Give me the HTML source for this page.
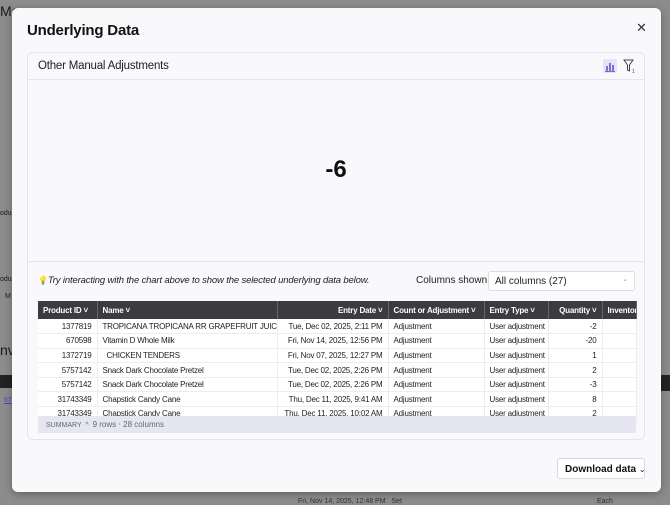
<!DOCTYPE html>
<html><head><style>
*{box-sizing:border-box;margin:0;padding:0}
body{width:670px;height:504px;overflow:hidden;background:#8c8c8c;font-family:"Liberation Sans",sans-serif;position:relative}
.bg{position:absolute;color:#1a1a1a}
.modal{position:absolute;left:12px;top:8px;width:649px;height:484px;background:#f9f9fc;border-radius:6px;box-shadow:0 2px 8px rgba(0,0,0,.3)}
.title{position:absolute;left:15px;top:14px;font-size:15px;font-weight:bold;color:#111;letter-spacing:-0.2px}
.close{position:absolute;left:624px;top:12px;font-size:13px;color:#333}
.card{position:absolute;left:15px;top:44px;width:618px;height:388px;border:1px solid #e4e4ec;border-radius:6px;background:#f9f9fc}
.chead{height:27px;border-bottom:1px solid #e4e4ec;padding:7px 10px;font-size:11.5px;color:#222;letter-spacing:-0.2px}
.big{position:absolute;left:0;width:100%;top:103px;text-align:center;font-size:24px;font-weight:bold;color:#111}
.sep{position:absolute;left:0;top:208px;width:100%;border-top:1px solid #e4e4ec}
.hint{position:absolute;left:10px;top:222px;font-size:9.5px;font-style:italic;color:#222;letter-spacing:-0.15px;white-space:nowrap}
.cs{position:absolute;left:388px;top:222px;font-size:10px;color:#222;white-space:nowrap}
.sel{position:absolute;left:460px;top:218px;width:147px;height:20px;border:1px solid #dcdce4;border-radius:3px;background:#fff;font-size:10px;padding:4px 6px;color:#222}
table{position:absolute;left:10px;top:248px;border-collapse:collapse;font-size:8px;color:#222;table-layout:fixed;width:598px;letter-spacing:-0.2px}
th{background:#3b3b40;color:#fff;font-weight:bold;height:18px;padding:0 5px;text-align:left;white-space:nowrap;overflow:hidden;border-right:1px solid #666}
td{height:14.6px;padding:0 5px;white-space:nowrap;overflow:hidden;border-right:1px solid #ececf2;border-bottom:1px solid #ececf2;background:#fff}
.r{text-align:right}
.sum{position:absolute;left:10px;top:363px;width:598px;height:17px;background:#e6e6f3;font-size:7px;color:#666;padding:4px 8px}
.dl{position:absolute;left:545px;top:450px;width:88px;height:21px;border:1px solid #d8d8e0;border-radius:3px;background:#fff;font-size:10px;font-weight:bold;padding:5px 7px;color:#111;white-space:nowrap}
</style></head><body>
<div class="bg" style="left:0;top:3px;font-size:14px">Ma</div>
<div class="bg" style="left:0;top:210px;font-size:7px">odu</div>
<div class="bg" style="left:0;top:276px;font-size:7px">odu</div>
<div class="bg" style="left:5px;top:293px;font-size:7px">M</div>
<div class="bg" style="left:0;top:342px;font-size:14px">nv</div>
<div class="bg" style="left:0;top:375px;width:12px;height:13px;background:#222"></div>
<div class="bg" style="left:661px;top:375px;width:9px;height:16px;background:#222"></div>
<div class="bg" style="left:4px;top:397px;font-size:7px;color:#44c;text-decoration:underline">67</div>
<div class="bg" style="left:298px;top:498px;font-size:7px;color:#333">Fri, Nov 14, 2025, 12:48 PM &nbsp; Set</div>
<div class="bg" style="left:597px;top:498px;font-size:7px;color:#333">Each</div>
<div class="modal">
<div class="title">Underlying Data</div>
<div class="close">✕</div>
<div class="card">
<div class="chead">Other Manual Adjustments
<span style="position:absolute;left:575px;top:6px;width:14px;height:14px;background:#e6e3f7;border-radius:2px"><svg width="14" height="14"><rect x="3" y="7" width="2" height="5" fill="#7a6fd6"/><rect x="6" y="4" width="2" height="8" fill="#7a6fd6"/><rect x="9" y="6" width="2" height="6" fill="#7a6fd6"/><rect x="2" y="12" width="10" height="1" fill="#7a6fd6"/></svg></span>
<svg style="position:absolute;left:594px;top:5px" width="14" height="16"><path d="M2 2h9L7.5 7v6L5.5 12V7z" fill="none" stroke="#444" stroke-width="1"/><text x="10" y="15" font-size="5" fill="#444">1</text></svg></div>
<div class="big">-6</div>
<div class="sep"></div>
<div class="hint"><span style="color:#e8c84a;font-style:normal;font-size:8px">💡</span>Try interacting with the chart above to show the selected underlying data below.</div>
<div class="cs">Columns shown:</div>
<div class="sel">All columns (27)<span style="position:absolute;right:6px;top:3px;font-size:7px;color:#999">⌄</span></div>
<table>
<colgroup><col style="width:59px"><col style="width:180px"><col style="width:111px"><col style="width:96px"><col style="width:64px"><col style="width:54px"><col style="width:34px"></colgroup>
<tr><th>Product ID ˅</th><th>Name ˅</th><th class="r">Entry Date ˅</th><th>Count or Adjustment ˅</th><th>Entry Type ˅</th><th class="r">Quantity ˅</th><th>Inventory</th></tr>
<tr><td class="r">1377819</td><td>TROPICANA TROPICANA RR GRAPEFRUIT JUICE</td><td class="r">Tue, Dec 02, 2025, 2:11 PM</td><td>Adjustment</td><td>User adjustment</td><td class="r">-2</td><td></td></tr>
<tr><td class="r">670598</td><td>Vitamin D Whole Milk</td><td class="r">Fri, Nov 14, 2025, 12:56 PM</td><td>Adjustment</td><td>User adjustment</td><td class="r">-20</td><td></td></tr>
<tr><td class="r">1372719</td><td>&nbsp; CHICKEN TENDERS</td><td class="r">Fri, Nov 07, 2025, 12:27 PM</td><td>Adjustment</td><td>User adjustment</td><td class="r">1</td><td></td></tr>
<tr><td class="r">5757142</td><td>Snack Dark Chocolate Pretzel</td><td class="r">Tue, Dec 02, 2025, 2:26 PM</td><td>Adjustment</td><td>User adjustment</td><td class="r">2</td><td></td></tr>
<tr><td class="r">5757142</td><td>Snack Dark Chocolate Pretzel</td><td class="r">Tue, Dec 02, 2025, 2:26 PM</td><td>Adjustment</td><td>User adjustment</td><td class="r">-3</td><td></td></tr>
<tr><td class="r">31743349</td><td>Chapstick Candy Cane</td><td class="r">Thu, Dec 11, 2025, 9:41 AM</td><td>Adjustment</td><td>User adjustment</td><td class="r">8</td><td></td></tr>
<tr><td class="r">31743349</td><td>Chapstick Candy Cane</td><td class="r">Thu, Dec 11, 2025, 10:02 AM</td><td>Adjustment</td><td>User adjustment</td><td class="r">2</td><td></td></tr>
</table>
<div class="sum">SUMMARY &nbsp;^ &nbsp;<span style="font-size:8px">9 rows ⋅ 28 columns</span></div>
</div>
<div class="dl">Download data <span style="font-size:8px;font-weight:normal">⌄</span></div>
</div>
</body></html>
